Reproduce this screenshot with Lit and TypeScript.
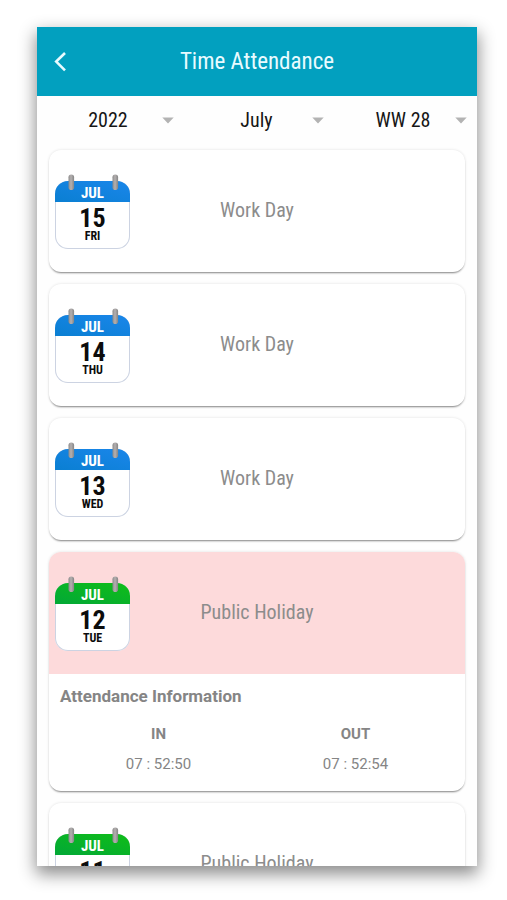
import { LitElement, html, css, svg, nothing } from "lit";
import { customElement, property } from "lit/decorators.js";
import { classMap } from "lit/directives/class-map.js";

interface Attendance {
  timeIn: string;
  timeOut: string;
}

interface Day {
  month: string;
  date: number;
  weekday: string;
  status: string;
  tone: "blue" | "green";
  highlighted?: boolean;
  attendance?: Attendance;
}

const DAYS: Day[] = [
  { month: "JUL", date: 15, weekday: "FRI", status: "Work Day", tone: "blue" },
  { month: "JUL", date: 14, weekday: "THU", status: "Work Day", tone: "blue" },
  { month: "JUL", date: 13, weekday: "WED", status: "Work Day", tone: "blue" },
  {
    month: "JUL",
    date: 12,
    weekday: "TUE",
    status: "Public Holiday",
    tone: "green",
    highlighted: true,
    attendance: { timeIn: "07 : 52:50", timeOut: "07 : 52:54" },
  },
  { month: "JUL", date: 11, weekday: "MON", status: "Public Holiday", tone: "green" },
];

@customElement("calendar-tile")
export class CalendarTile extends LitElement {
  @property() month = "";
  @property({ type: Number }) date = 1;
  @property() weekday = "";
  @property() tone = "blue";

  static styles = css`
    :host {
      display: block;
      position: relative;
      width: 75px;
      padding-top: 7px;
      text-align: center;
      font-weight: 700;
    }
    .tile {
      box-sizing: border-box;
      height: 68px;
      border-radius: 13px;
      overflow: hidden;
      background: #fff;
      color: #0c0c0c;
      box-shadow: inset 0 0 0 1px #ccd3e2;
    }
    .month {
      height: 21px;
      line-height: 24px;
      font-size: 15px;
      color: #fff;
    }
    .blue {
      background: linear-gradient(15deg, #0a7fd2, #1a86ea);
    }
    .green {
      background: linear-gradient(15deg, #02a837, #10bd18);
    }
    .date {
      font-size: 26px;
      line-height: 24px;
      padding-top: 4px;
    }
    .weekday {
      font-size: 12px;
      line-height: 12px;
    }
    .rings {
      position: absolute;
      top: 0;
      left: 0;
      width: 75px;
      height: 18px;
    }
  `;

  render() {
    return html`
      <div class="tile">
        <div class="month ${this.tone}">${this.month}</div>
        <div class="date">${this.date}</div>
        <div class="weekday">${this.weekday}</div>
      </div>
      <svg class="rings" viewBox="0 0 75 18" aria-hidden="true">
        <defs>
          <linearGradient id="metal">
            <stop offset="0" stop-color="#8b8b8b" />
            <stop offset="0.45" stop-color="#b4b0b0" />
            <stop offset="1" stop-color="#858585" />
          </linearGradient>
        </defs>
        ${[13.5, 57.5].map(
          (x) => svg`<rect x=${x} y="0.5" width="5.6" height="15.5" rx="2.8" fill="url(#metal)" />`
        )}
      </svg>
    `;
  }
}

@customElement("app-root")
export class AppRoot extends LitElement {
  static styles = css`
    :host {
      display: block;
      box-sizing: border-box;
      height: 100vh;
      padding: 27px 30px 34px 37px;
      background: #fff;
      font-family: "Roboto Condensed", "Liberation Sans Narrow", Roboto, sans-serif;
      color: #161616;
    }
    .screen {
      display: flex;
      flex-direction: column;
      height: 100%;
      overflow: hidden;
      background: #fefefe;
      box-shadow: 0 7px 16px 1px rgba(0, 0, 0, 0.46);
    }
    .bar {
      flex: none;
      display: grid;
      grid-template-columns: 48px 1fr 48px;
      align-items: center;
      height: 69px;
      background: #02a0bf;
      color: #e9fbff;
    }
    .back {
      display: flex;
      align-items: center;
      justify-content: center;
      height: 48px;
      padding: 0 3px 0 0;
      border: 0;
      background: none;
      color: inherit;
    }
    .title {
      margin: 0;
      text-align: center;
      font-size: 23px;
      font-weight: 400;
    }
    .filters {
      flex: none;
      display: grid;
      grid-template-columns: 147fr 150fr 143fr;
      height: 48px;
    }
    .filter {
      position: relative;
      display: flex;
    }
    .filter select {
      appearance: none;
      width: 100%;
      padding: 0 5px 0 0;
      border: 0;
      background: none;
      color: inherit;
      font-family: inherit;
      font-size: 20px;
      text-align: center;
      text-align-last: center;
    }
    .arrow {
      position: absolute;
      top: 21px;
      right: 10px;
      pointer-events: none;
    }
    .list {
      flex: 1;
      min-height: 0;
      display: flex;
      flex-direction: column;
      gap: 12px;
      margin: 0;
      padding: 6px 12px 12px;
      overflow-y: auto;
      scrollbar-width: none;
      list-style: none;
    }
    .card {
      flex: none;
      border-radius: 12px;
      background: #fff;
      box-shadow: 0 2px 2px -1px rgba(0, 0, 0, 0.45), 0 0 3px rgba(0, 0, 0, 0.12);
    }
    .day {
      display: grid;
      grid-template-columns: 75px 1fr 75px;
      align-items: center;
      height: 122px;
      padding: 0 6px;
      border-radius: 12px;
    }
    .day.highlighted {
      border-radius: 12px 12px 0 0;
      background: #fddadb;
    }
    .status {
      padding-bottom: 2px;
      text-align: center;
      font-size: 20px;
      color: #8c8c8c;
    }
    .details {
      padding: 11px 11px 12px;
      font-family: Roboto, sans-serif;
      color: #858585;
    }
    .details h2 {
      margin: 0 0 12px;
      font-size: 17px;
      line-height: 22px;
      font-weight: 700;
    }
    .times {
      width: 100%;
      table-layout: fixed;
      border-collapse: collapse;
      text-align: center;
      font-size: 15px;
      line-height: 30px;
    }
    .times th,
    .times td {
      padding: 0;
    }
  `;

  private filter(label: string, value: string) {
    return html`
      <div class="filter">
        <select aria-label=${label}>
          <option>${value}</option>
        </select>
        <svg class="arrow" width="12" height="7" viewBox="0 0 12 7" aria-hidden="true">
          <path d="M0.3 0.5h11.4L6 6.6z" fill="#b3b3b3" />
        </svg>
      </div>
    `;
  }

  private details(a: Attendance) {
    return html`
      <div class="details">
        <h2>Attendance Information</h2>
        <table class="times">
          <thead>
            <tr><th scope="col">IN</th><th scope="col">OUT</th></tr>
          </thead>
          <tbody>
            <tr><td>${a.timeIn}</td><td>${a.timeOut}</td></tr>
          </tbody>
        </table>
      </div>
    `;
  }

  private card(day: Day) {
    return html`
      <li class="card">
        <div class=${classMap({ day: true, highlighted: !!day.highlighted })}>
          <calendar-tile
            .month=${day.month}
            .date=${day.date}
            .weekday=${day.weekday}
            .tone=${day.tone}
          ></calendar-tile>
          <div class="status">${day.status}</div>
        </div>
        ${day.attendance ? this.details(day.attendance) : nothing}
      </li>
    `;
  }

  render() {
    return html`
      <main class="screen">
        <header class="bar">
          <button class="back" type="button" aria-label="Back">
            <svg width="14" height="22" viewBox="0 0 14 22" fill="none" aria-hidden="true">
              <path d="M12 2L3.2 10.6l8.8 8.8" stroke="currentColor" stroke-width="2.6" />
            </svg>
          </button>
          <h1 class="title">Time Attendance</h1>
        </header>
        <div class="filters">
          ${this.filter("Year", "2022")} ${this.filter("Month", "July")}
          ${this.filter("Work week", "WW 28")}
        </div>
        <ul class="list">
          ${DAYS.map((day) => this.card(day))}
        </ul>
      </main>
    `;
  }
}
